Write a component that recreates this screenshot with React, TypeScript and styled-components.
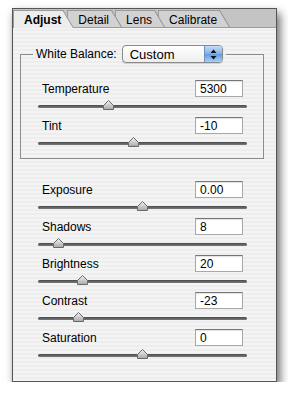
import styled, { createGlobalStyle } from 'styled-components'

const Global = createGlobalStyle`
  html, body {
    margin: 0;
    background: #fff;
  }
  body {
    font-family: "Liberation Sans", Arial, sans-serif;
    font-size: 12px;
    color: #000;
  }
`

const Panel = styled.div`
  margin: 8px 0 0 12px;
  width: 265px;
  height: 374px;
  box-sizing: border-box;
  border: 1px solid #555;
  box-shadow: 3px 5px 9px rgba(0, 0, 0, 0.6);
  display: flex;
  flex-direction: column;
  background: repeating-linear-gradient(#ededed 0 2px, #f4f4f4 2px 4px);
`

const TabBar = styled.div`
  height: 19px;
  box-sizing: border-box;
  display: flex;
  align-items: flex-end;
  background: #c4c4c4;
  border-bottom: 1px solid #9a9a9a;
  padding-left: 0;
`

const Tab = styled.div<{ $active?: boolean; $z: number }>`
  position: relative;
  z-index: ${p => p.$z};
  height: ${p => (p.$active ? '18px' : '17px')};
  margin-bottom: ${p => (p.$active ? '-1px' : '0')};
  box-sizing: border-box;
  padding: 1px 1px 0 10px;
  margin-right: 5px;
  display: flex;
  align-items: center;
  font-size: 12px;
  font-weight: ${p => (p.$active ? 'bold' : 'normal')};
  background: ${p => (p.$active ? '#ededed' : '#d2d2d2')};
  border-left: 1px solid #9a9a9a;
  border-top: 1px solid #9a9a9a;
  &::after {
    content: '';
    position: absolute;
    top: -1px;
    right: -12px;
    width: 14px;
    height: calc(100% + 1px);
    box-sizing: border-box;
    background: inherit;
    border-top: 1px solid #9a9a9a;
    border-right: 1px solid #8a8a8a;
    transform: skewX(31deg);
    transform-origin: bottom left;
    z-index: -1;
  }
`

const Body = styled.div`
  padding: 0 12px 0 7px;
  display: flex;
  flex-direction: column;
`

const Group = styled.fieldset`
  margin: 17px 0 0 0;
  padding: 17px 16px 4px 17px;
  border: 1px solid #8c8c8c;
  min-width: 0;
`

const Legend = styled.legend`
  margin-left: -5px;
  padding: 0 3px;
  display: flex;
  align-items: center;
  gap: 5px;
  white-space: nowrap;
  font-size: 12px;
`

const Popup = styled.div`
  width: 101px;
  height: 18px;
  box-sizing: border-box;
  border: 1px solid #8a8a8a;
  border-radius: 4px;
  background: linear-gradient(#ffffff, #eeeeee);
  display: flex;
  align-items: center;
  justify-content: space-between;
  overflow: hidden;
  box-shadow: 0 1px 1px rgba(0, 0, 0, 0.15);
`

const PopupText = styled.span`
  padding-left: 7px;
  font-size: 13px;
`

const PopupArrows = styled.span`
  width: 17px;
  height: 100%;
  border-left: 1px solid #6e8fb8;
  background: linear-gradient(#c4dcf6 0%, #7fb0ea 50%, #5e9ae4 51%, #a6d0fb 100%);
  display: flex;
  align-items: center;
  justify-content: center;
`

const Sliders = styled.div`
  display: flex;
  flex-direction: column;
  padding: 22px 29px 0 25px;
`

const Row = styled.div`
  display: flex;
  flex-direction: column;
`

const Head = styled.div`
  height: 17px;
  padding: 0 4px;
  display: flex;
  align-items: center;
  justify-content: space-between;
`

const Label = styled.span`
  font-size: 12px;
`

const Field = styled.div`
  width: 48px;
  height: 17px;
  box-sizing: border-box;
  background: #fff;
  border: 1px solid #a8a8a8;
  border-top-color: #767676;
  box-shadow: inset 0 1px 1px rgba(0, 0, 0, 0.12);
  padding: 0 4px;
  display: flex;
  align-items: center;
  font-size: 12px;
`

const Slider = styled.div`
  position: relative;
  height: 20px;
`

const Track = styled.div`
  position: absolute;
  left: 0;
  right: 0;
  top: 8px;
  height: 3px;
  border-radius: 2px;
  background: linear-gradient(#4a4a4a, #7a7a7a);
`

const Thumb = styled.svg`
  position: absolute;
  top: 3px;
  width: 11px;
  height: 10px;
  margin-left: -5px;
`

const wb = [
  { label: 'Temperature', value: '5300', pos: 70 },
  { label: 'Tint', value: '-10', pos: 95 },
]

const basic = [
  { label: 'Exposure', value: '0.00', pos: 104 },
  { label: 'Shadows', value: '8', pos: 20 },
  { label: 'Brightness', value: '20', pos: 44 },
  { label: 'Contrast', value: '-23', pos: 40 },
  { label: 'Saturation', value: '0', pos: 104 },
]

function SliderRow({ label, value, pos }: { label: string; value: string; pos: number }) {
  return (
    <Row>
      <Head>
        <Label>{label}</Label>
        <Field>{value}</Field>
      </Head>
      <Slider>
        <Track />
        <Thumb viewBox="0 0 11 10" style={{ left: pos }}>
          <defs>
            <linearGradient id="tg" x1="0" y1="0" x2="0" y2="1">
              <stop offset="0" stopColor="#f4f4f4" />
              <stop offset="1" stopColor="#a8a8a8" />
            </linearGradient>
          </defs>
          <path d="M5.5 0.5 L10.5 5.5 L10.5 9.5 L0.5 9.5 L0.5 5.5 Z" fill="url(#tg)" stroke="#6a6a6a" strokeWidth="1" />
        </Thumb>
      </Slider>
    </Row>
  )
}

export default function App() {
  return (
    <>
      <Global />
      <Panel>
        <TabBar>
          <Tab $active $z={4}>Adjust</Tab>
          <Tab $z={3}>Detail</Tab>
          <Tab $z={2}>Lens</Tab>
          <Tab $z={1}>Calibrate</Tab>
        </TabBar>
        <Body>
          <Group>
            <Legend>
              <span>White Balance:</span>
              <Popup>
                <PopupText>Custom</PopupText>
                <PopupArrows>
                  <svg width="7" height="11" viewBox="0 0 7 11">
                    <path d="M3.5 0.5 L6.5 4 L0.5 4 Z" fill="#111" />
                    <path d="M3.5 10.5 L6.5 7 L0.5 7 Z" fill="#111" />
                  </svg>
                </PopupArrows>
              </Popup>
            </Legend>
            {wb.map(r => (
              <SliderRow key={r.label} {...r} />
            ))}
          </Group>
        </Body>
        <Sliders>
          {basic.map(r => (
            <SliderRow key={r.label} {...r} />
          ))}
        </Sliders>
      </Panel>
    </>
  )
}
